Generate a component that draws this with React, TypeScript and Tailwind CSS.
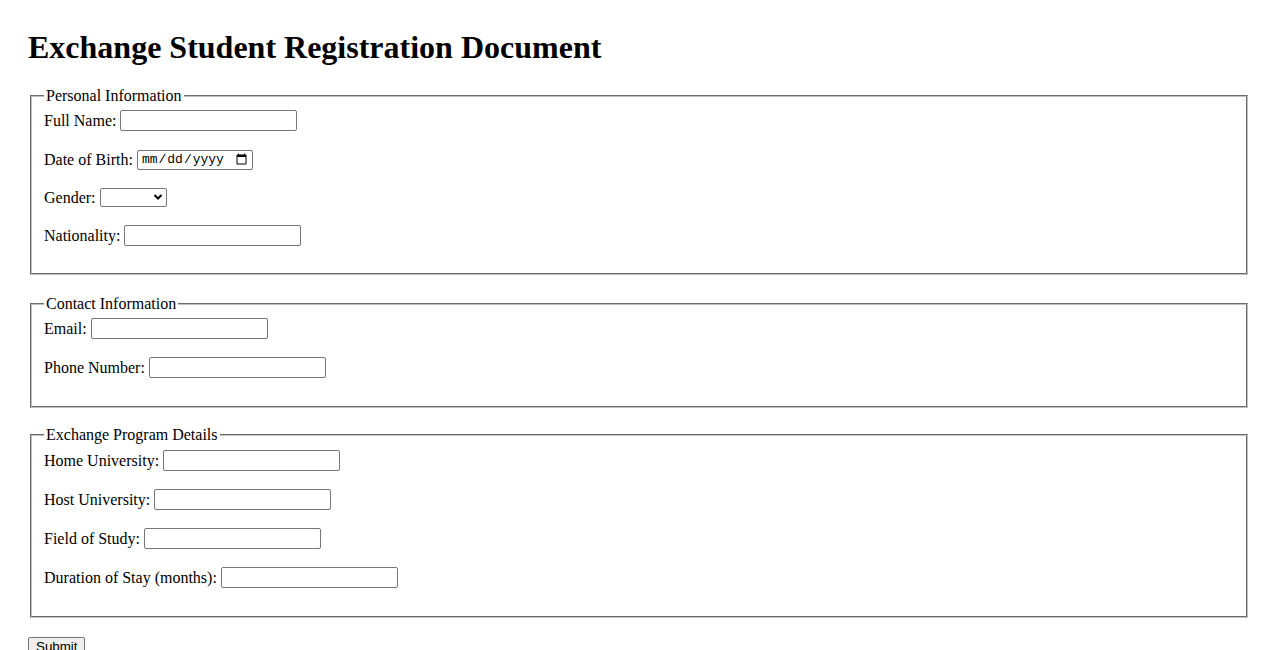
import React from 'react'

type Field = { label: string; kind?: 'text' | 'date' | 'select' }

type Section = { legend: string; fields: Field[]; className: string }

const sections: Section[] = [
    {
        legend: 'Personal Information',
        className: 'pt-[5px] pb-[27px]',
        fields: [
            { label: 'Full Name:' },
            { label: 'Date of Birth:', kind: 'date' },
            { label: 'Gender:', kind: 'select' },
            { label: 'Nationality:' },
        ],
    },
    {
        legend: 'Contact Information',
        className: 'mt-[20px] pt-[5px] pb-[28px]',
        fields: [{ label: 'Email:' }, { label: 'Phone Number:' }],
    },
    {
        legend: 'Exchange Program Details',
        className: 'mt-[18px] pt-[6px] pb-[28px]',
        fields: [
            { label: 'Home University:' },
            { label: 'Host University:' },
            { label: 'Field of Study:' },
            { label: 'Duration of Stay (months):' },
        ],
    },
]

const FieldInput = ({ kind = 'text' }: { kind?: Field['kind'] }) => {
    if (kind === 'date') {
        return (
            <input
                type="date"
                className="ml-[4px] h-[20px] w-[116px] rounded-[2px] border border-[#767676] bg-white pl-[3px] pr-[2px] font-['Liberation_Mono',monospace] text-[13px] text-black"
            />
        )
    }
    if (kind === 'select') {
        return (
            <div className="relative ml-[4px] h-[19px] w-[67px]">
                <select className="h-full w-full appearance-none rounded-[2px] border border-[#767676] bg-white">
                    <option value=""></option>
                    <option>Male</option>
                    <option>Female</option>
                    <option>Other</option>
                </select>
                <svg
                    className="pointer-events-none absolute right-[4px] top-[5px]"
                    width="10"
                    height="8"
                    viewBox="0 0 10 8"
                >
                    <path d="M1.5 2 L5 5.5 L8.5 2" fill="none" stroke="#000" strokeWidth="2" />
                </svg>
            </div>
        )
    }
    return (
        <input
            type="text"
            className="ml-[4px] h-[21px] w-[177px] rounded-[2px] border border-[#767676] bg-white px-[2px] font-['Liberation_Sans',sans-serif] text-[13px]"
        />
    )
}

// the select line sits a little tighter than the others
const rowHeight = (kind?: Field['kind']) => (kind === 'select' ? 'h-[19px]' : 'h-[21px]')

export default function App() {
    return (
        <div className="h-[650px] overflow-hidden bg-white px-[28px] pt-[29px] font-['Liberation_Serif',serif] text-[16px] text-black">
            <h1 className="mb-[21px] text-[32px] leading-[37px] font-bold">Exchange Student Registration Document</h1>

            <form className="flex flex-col" onSubmit={(e) => e.preventDefault()}>
                {sections.map((section) => (
                    <fieldset
                        key={section.legend}
                        className={`mx-[2px] border-2 border-[#c0c0c0] px-[12px] [border-style:groove] ${section.className}`}
                    >
                        <legend className="px-[2px] leading-[18px]">{section.legend}</legend>
                        <div className="flex flex-col gap-[18px]">
                            {section.fields.map((field) => (
                                <div key={field.label} className={`flex items-center ${rowHeight(field.kind)}`}>
                                    <label className="leading-[18px]">{field.label}</label>
                                    <FieldInput kind={field.kind} />
                                </div>
                            ))}
                        </div>
                    </fieldset>
                ))}

                <div className="mt-[16px]">
                    <button
                        type="submit"
                        className="h-[21px] rounded-[2px] border border-[#767676] bg-[#efefef] px-[7px] font-['Liberation_Sans',sans-serif] text-[13.33px] leading-[16px]"
                    >
                        Submit
                    </button>
                </div>
            </form>
        </div>
    )
}
